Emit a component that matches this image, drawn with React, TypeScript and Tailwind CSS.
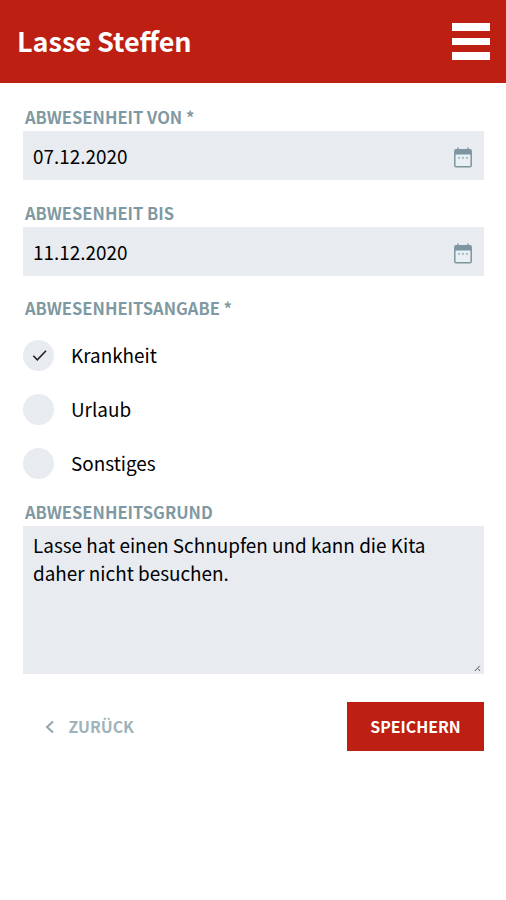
import { useState } from 'react';
import type { ReactNode } from 'react';

const REASONS = ['Krankheit', 'Urlaub', 'Sonstiges'];

function CalendarIcon() {
  return (
    <svg width="18" height="21" viewBox="0 0 18 21" fill="none" className="mt-[3px] shrink-0">
      <path d="M4 0.5v3M14 0.5v3" stroke="#7d959f" strokeWidth="1.4" />
      <rect x="0.8" y="2.8" width="16.4" height="17" rx="1.4" fill="#e8f0f4" stroke="#7d959f" strokeWidth="1.5" />
      <path d="M1 2.5h16v5H1z" fill="#7d959f" />
      <path d="M4 10.8h2M8 10.8h2M12 10.8h2" stroke="#8ea3ac" strokeWidth="1.2" />
    </svg>
  );
}

function Label({ children }: { children: ReactNode }) {
  return (
    <div className="h-[26px] pl-0.5 text-[16.55px] leading-6 font-bold text-[#7f99a2] whitespace-nowrap">
      {children}
    </div>
  );
}

interface DateFieldProps {
  label: string;
  value: string;
  onChange: (value: string) => void;
}

function DateField({ label, value, onChange }: DateFieldProps) {
  return (
    <div>
      <Label>{label}</Label>
      <div className="flex h-[49px] items-center bg-[#e8ebf0] pr-3 pl-2.5">
        <input
          type="text"
          aria-label={label}
          value={value}
          onChange={(e) => onChange(e.target.value)}
          className="h-full min-w-0 flex-1 bg-transparent text-[18.9px] text-black outline-none"
        />
        <CalendarIcon />
      </div>
    </div>
  );
}

export default function App() {
  const [from, setFrom] = useState('07.12.2020');
  const [until, setUntil] = useState('11.12.2020');
  const [reason, setReason] = useState('Krankheit');
  const [note, setNote] = useState(
    'Lasse hat einen Schnupfen und kann die Kita daher nicht besuchen.'
  );

  return (
    <div className="min-h-screen bg-white font-['Noto_Sans_CJK_SC','Noto_Sans',sans-serif]">
      <header className="flex h-[83px] items-center justify-between bg-[#bd2013] pr-4 pl-[17px]">
        <h1 className="pb-0.5 text-[27px] leading-10 font-bold text-white">Lasse Steffen</h1>
        <button aria-label="Menü" className="flex w-[38px] flex-col gap-[7px]">
          <span className="h-2 w-full bg-white" />
          <span className="h-[7px] w-full bg-white" />
          <span className="h-2 w-full bg-white" />
        </button>
      </header>

      <main className="flex flex-col pt-[22px] pr-[22px] pl-[23px]">
        <div className="flex flex-col gap-[21px]">
          <DateField label="ABWESENHEIT VON *" value={from} onChange={setFrom} />
          <DateField label="ABWESENHEIT BIS" value={until} onChange={setUntil} />
        </div>

        <div className="mt-5">
          <Label>ABWESENHEITSANGABE *</Label>
          <div className="mt-[17.5px] flex flex-col gap-[23px]">
            {REASONS.map((item) => (
              <button
                key={item}
                onClick={() => setReason(item)}
                className="flex h-[31px] items-center gap-[17px] text-left"
              >
                <span className="flex size-[31px] items-center justify-center rounded-full bg-[#e8ebf0]">
                  {item === reason && (
                    <svg width="15" height="12" viewBox="0 0 15 12" fill="none" className="ml-0.5">
                      <path d="M1.3 6.8l4 4L14 1.8" stroke="#222" strokeWidth="1.6" />
                    </svg>
                  )}
                </span>
                <span className="pb-px text-[18.9px] leading-7 text-black">{item}</span>
              </button>
            ))}
          </div>
        </div>

        <div className="mt-[21.5px]">
          <Label>ABWESENHEITSGRUND</Label>
          <div className="relative h-[148px]">
            <textarea
              aria-label="Abwesenheitsgrund"
              value={note}
              onChange={(e) => setNote(e.target.value)}
              className="block size-full resize-none bg-[#e8ebf0] px-2.5 pt-[5px] text-[18.9px] leading-7 text-black outline-none"
            />
            <svg width="8" height="8" viewBox="0 0 8 8" className="absolute right-[2px] bottom-[2px]" fill="none">
              <path d="M0.8 7L5.8 1.8M4 4.5L6 7" stroke="#555" strokeWidth="1" />
            </svg>
          </div>
        </div>

        <div className="mt-7 flex h-[49px] items-center justify-between">
          <button className="flex items-center gap-[15px] pl-[21.5px] text-[15.9px] font-bold text-[#9fb3ba]">
            <svg width="9" height="14" viewBox="0 0 9 14" fill="none" className="mt-0.5">
              <path d="M8 1.5L2 7l6 5.5" stroke="#8fa5ad" strokeWidth="2" />
            </svg>
            ZURÜCK
          </button>
          <button className="h-full w-[137px] bg-[#bd2013] text-[15.9px] font-bold text-white">
            SPEICHERN
          </button>
        </div>
      </main>
    </div>
  );
}
